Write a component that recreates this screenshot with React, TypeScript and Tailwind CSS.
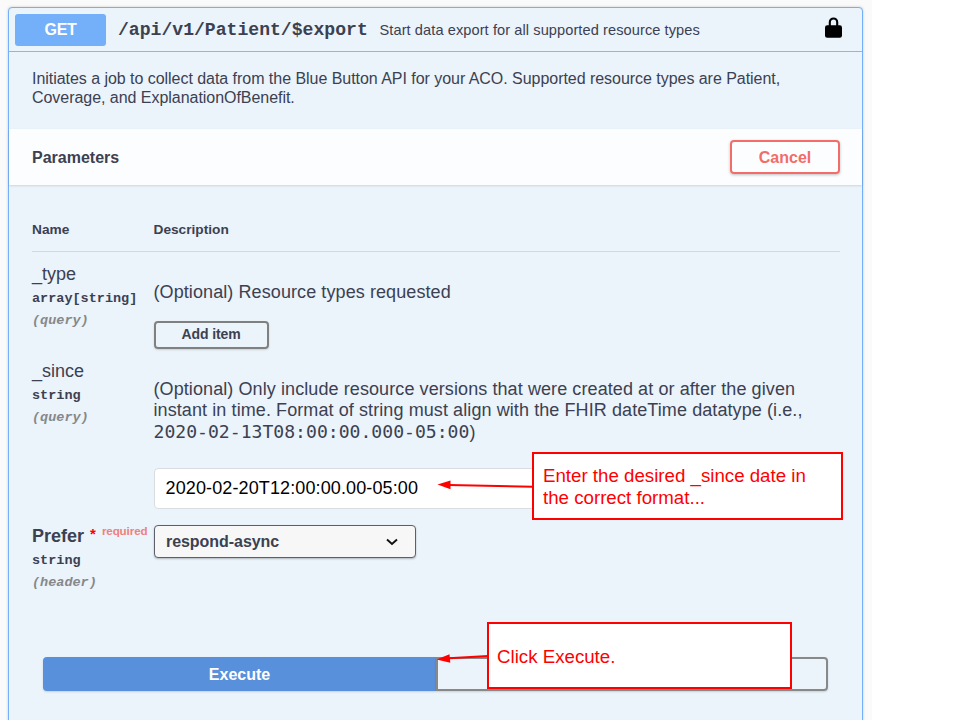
import React from "react";

const sans = "font-['Liberation_Sans',Arial,sans-serif]";
const mono = "font-['Liberation_Mono','Courier_New',monospace]";

function ParamName({ name, type, place, required }: { name: string; type: string; place: string; required?: boolean }) {
  return (
    <div className="w-[121.5px] shrink-0 whitespace-nowrap">
      <div className={`flex h-6 text-[18px] leading-6 ${required ? "font-bold" : ""}`}>
        <span>{name}</span>
        {required && (
          <>
            <span className="ml-[6px] -mt-[2px] text-[15px] text-[#f00]">*</span>
            <span className="ml-[6px] -mt-[5px] text-[11.6px] font-bold tracking-[-0.1px] text-[#f0807e]">required</span>
          </>
        )}
      </div>
      <div className={`h-[24px] text-[13.5px] font-bold leading-[25px] ${mono}`}>{type}</div>
      <div className={`h-[20px] text-[13.5px] font-bold italic leading-[21px] text-[#868889] ${mono}`}>{place}</div>
    </div>
  );
}

export default function App() {
  return (
    <div className={`relative h-[720px] w-[960px] overflow-hidden bg-white text-[#3b4151] ${sans}`}>
      <div className="h-[720px] w-[872px] bg-[#fafafa] pl-2 pt-[7px]">
        <div className="h-[730px] w-[855px] rounded-[4px] border border-[#74aff9] bg-[#ebf3fb] shadow-[0_0_3px_rgba(0,0,0,0.19)]">
          <header className="flex h-[44px] items-center whitespace-nowrap border-b border-[#7fb9f8] pl-[6px] pr-[20px]">
            <div className="h-[32px] w-[91px] rounded-[3px] bg-[#74aff9] text-center text-[16px] font-bold leading-[32px] tracking-[-0.3px] text-white">GET</div>
            <div className={`ml-[12px] mt-[2px] w-[261.5px] text-[18.1px] font-bold ${mono}`}>/api/v1/Patient/$export</div>
            <div className="mt-[3px] text-[14.6px] tracking-[0.08px]">Start data export for all supported resource types</div>
            <svg className="-mt-[4px] ml-auto" width="17" height="21" viewBox="0 0 17 21">
              <path d="M4.8 10V5.2a3.7 3.7 0 0 1 7.4 0V10" fill="none" stroke="#000" strokeWidth="2.1" />
              <rect x="0" y="8.2" width="17" height="12.5" rx="2.2" fill="#000" />
            </svg>
          </header>

          <div className="h-[77px] whitespace-nowrap pl-[23px] pt-[18px] text-[16px] leading-[18.5px] tracking-[-0.04px]">
            <div>Initiates a job to collect data from the Blue Button API for your ACO. Supported resource types are Patient,</div>
            <div>Coverage, and ExplanationOfBenefit.</div>
          </div>

          <div className="flex h-[56px] items-center justify-between bg-[#fcfdfe] pl-[23px] pr-[22px] shadow-[0_1px_2px_rgba(0,0,0,0.12)]">
            <h4 className="pt-[2px] text-[16px] font-bold">Parameters</h4>
            <button className="h-[34px] w-[110px] rounded-[4px] border-2 border-[#f26d69] pt-px text-[16px] font-bold text-[#f26d69] shadow-[0_1px_3px_rgba(0,0,0,0.25)]">Cancel</button>
          </div>

          <div className="pl-[23px] pr-[22px]">
            <div className="flex h-[67px] border-b border-[#d3d9e2] pt-[37px] text-[13.7px] font-bold leading-4">
              <div className="w-[121.5px]">Name</div>
              <div>Description</div>
            </div>

            <div className="flex h-[97px] pt-[10px]">
              <ParamName name="_type" type="array[string]" place="(query)" />
              <div className="pt-[20px]">
                <div className="h-[39px] text-[18px] leading-[21px] tracking-[0.09px]">(Optional) Resource types requested</div>
                <button className="h-[28px] w-[115px] rounded-[4px] border-2 border-[#808080] pb-[2px] text-[14px] font-bold leading-[22px] tracking-[-0.1px] shadow-[0_1px_2px_rgba(0,0,0,0.15)]">Add item</button>
              </div>
            </div>

            <div className="flex h-[165px] pt-[10px]">
              <ParamName name="_since" type="string" place="(query)" />
              <div className="relative flex-1 whitespace-nowrap pt-[20px] text-[18px] leading-[21px]">
                <div className="tracking-[0.09px]">(Optional) Only include resource versions that were created at or after the given</div>
                <div className="tracking-[0.09px]">instant in time. Format of string must align with the FHIR dateTime datatype (i.e.,</div>
                <div className="h-[47px] leading-[21px]"><code className="font-['DejaVu_Sans_Mono',monospace] text-[18.1px]">2020-02-13T08:00:00.000-05:00</code>)</div>
                <div className="h-[41px] w-[500px] rounded-[4px] border border-[#d9dde2] bg-white pl-[11px] leading-[38px] tracking-[0.12px] text-black">2020-02-20T12:00:00.00-05:00</div>
              </div>
            </div>

            <div className="flex h-[143px] pt-[10px]">
              <ParamName name="Prefer" type="string" place="(header)" required />
              <div className="mt-px flex h-[33px] w-[262px] items-center justify-between rounded-[4px] border-[1.5px] border-[#5c606b] bg-[#f7f7f7] pl-[11.5px] pr-[17px] text-[16px] font-bold tracking-[-0.05px] shadow-[0_1px_2px_rgba(0,0,0,0.25)]">
                <span className="pt-px">respond-async</span>
                <svg width="12" height="8" viewBox="0 0 12 8"><path d="M1 1.5 6 6l5-4.5" fill="none" stroke="#111" strokeWidth="1.9" /></svg>
              </div>
            </div>

            <div className="flex h-[34px] pl-[11px]">
              <button className="h-[34px] w-[393px] rounded-l-[4px] bg-[#5890dc] pt-px text-[16px] font-bold text-white shadow-[0_1px_2px_rgba(0,0,0,0.15)]">Execute</button>
              <div className="h-[34px] w-[392px] rounded-r-[4px] border-2 border-[#888] shadow-[0_1px_2px_rgba(0,0,0,0.15)]" />
            </div>
          </div>
        </div>
      </div>

      <svg className="absolute left-0 top-0" width="960" height="720" viewBox="0 0 960 720">
        <path d="M533 486.700 449 485M488 656 449 658.200" stroke="#f00" strokeWidth="2" />
        <path d="M437.500 484.500 450.500 480.500V489.300ZM436.500 659.500 449.500 654.200 450.300 662.800Z" fill="#f00" />
      </svg>
      <div className="absolute left-[532px] top-[452px] h-[68px] w-[311px] whitespace-nowrap border-2 border-[#f00] bg-white pl-[9px] pt-[11px] text-[18.7px] leading-[22px] text-[#f00]">
        <div>Enter the desired _since date in</div>
        <div>the correct format...</div>
      </div>
      <div className="absolute left-[487px] top-[622px] h-[67px] w-[305px] whitespace-nowrap border-2 border-[#f00] bg-white pl-[8px] pt-[22px] text-[18.7px] leading-[22px] text-[#f00]">Click Execute.</div>
    </div>
  );
}
